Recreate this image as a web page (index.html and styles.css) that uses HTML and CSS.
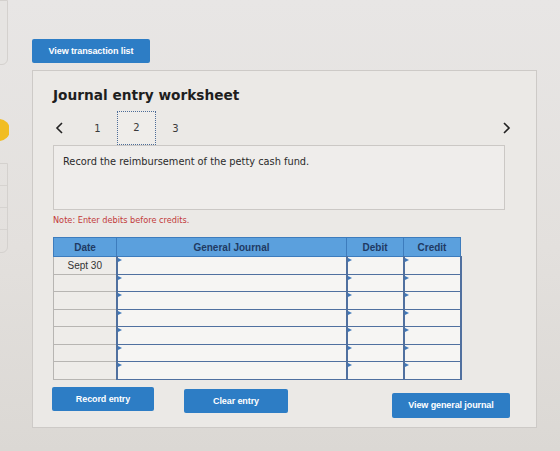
FILE: index.html
```html
<!DOCTYPE html>
<html lang="en">
<head>
  <meta charset="UTF-8" />
  <meta name="viewport" content="width=device-width, initial-scale=1.0"/>
  <title>Journal entry worksheet</title>
  <link rel="stylesheet" href="styles.css">
</head>
<body>

  <div class="page">
    <!-- Side rail (mostly scrolled out of view) -->
    <aside class="rail">
      <div class="rail-card"></div>
      <div class="rail-dot"></div>
      <ul class="rail-list">
        <li></li><li></li><li></li><li></li>
      </ul>
    </aside>

    <main class="content">
      <button class="btn btn-top">View transaction list</button>

      <section class="worksheet">
        <h1>Journal entry worksheet</h1>

        <nav class="pager">
          <span class="chev"><svg width="8" height="12" viewBox="0 0 8 12"><polyline points="7,1 2,6 7,11" fill="none" stroke="#222" stroke-width="1.6"/></svg></span>
          <span class="page-num page-first">1</span>
          <span class="page-num current">2</span>
          <span class="page-num">3</span>
          <span class="chev chev-next"><svg width="8" height="12" viewBox="0 0 8 12"><polyline points="1,1 6,6 1,11" fill="none" stroke="#222" stroke-width="1.6"/></svg></span>
        </nav>

        <div class="prompt">Record the reimbursement of the petty cash fund.</div>

        <p class="note">Note: Enter debits before credits.</p>

        <table class="journal">
          <thead>
            <tr>
              <th class="col-date">Date</th>
              <th class="col-acct">General Journal</th>
              <th class="col-amt">Debit</th>
              <th class="col-amt">Credit</th>
            </tr>
          </thead>
          <tbody>
            <tr><td class="date">Sept 30</td><td class="cell"></td><td class="cell"></td><td class="cell"></td></tr>
            <tr><td class="date"></td><td class="cell"></td><td class="cell"></td><td class="cell"></td></tr>
            <tr><td class="date"></td><td class="cell"></td><td class="cell"></td><td class="cell"></td></tr>
            <tr><td class="date"></td><td class="cell"></td><td class="cell"></td><td class="cell"></td></tr>
            <tr><td class="date"></td><td class="cell"></td><td class="cell"></td><td class="cell"></td></tr>
            <tr><td class="date"></td><td class="cell"></td><td class="cell"></td><td class="cell"></td></tr>
            <tr><td class="date"></td><td class="cell"></td><td class="cell"></td><td class="cell"></td></tr>
          </tbody>
        </table>

        <div class="actions">
          <button class="btn btn-record">Record entry</button>
          <button class="btn btn-clear">Clear entry</button>
          <button class="btn btn-view">View general journal</button>
        </div>
      </section>
    </main>
  </div>

</body>
</html>
```

FILE: styles.css
```css
* { box-sizing: border-box; }
body { margin: 0; height: 451px; overflow: hidden; background: linear-gradient(180deg, #e8e6e5 0%, #e3e0dd 55%, #dbd8d4 100%); font-family: "Liberation Sans", Arial, sans-serif; color: #333; }
.page { display: flex; height: 451px; }

/* side rail */
.rail { width: 9px; overflow: hidden; flex-shrink: 0; }
.rail-card { width: 20px; height: 65px; margin-left: -12px; border: 1px solid #d4d1ce; border-radius: 0 0 6px 0; background: #e6e4e2; }
.rail-dot { width: 22px; height: 22px; margin: 54px 0 0 -12px; border-radius: 50%; background: #f1bd22; }
.rail-list { list-style: none; margin: 22px 0 0 -12px; padding: 0; width: 20px; border: 1px solid #d4d1ce; border-radius: 0 0 6px 0; }
.rail-list li { height: 22px; border-bottom: 1px solid #d6d3d0; }
.rail-list li:last-child { border-bottom: none; }

.content { padding: 39px 0 0 23px; }

.btn { border: none; border-radius: 2px; background: #2d7dc5; color: #fff; font-family: "Liberation Sans", Arial, sans-serif; font-weight: bold; font-size: 9px; letter-spacing: -0.1px; cursor: pointer; }
.btn-top { display: block; width: 118px; height: 24px; margin-bottom: 7px; }

.worksheet { width: 505px; height: 358px; background: #ebe9e6; border: 1px solid #cdcac7; padding: 0 31px 0 20px; }
.worksheet h1 { margin: 15px 0 0; font-family: "DejaVu Sans", Verdana, sans-serif; font-size: 13.7px; line-height: 18px; color: #1e1e1e; }

.pager { display: flex; align-items: center; height: 34px; margin-top: 7px; font-family: "DejaVu Sans", Verdana, sans-serif; font-size: 10px; color: #3a3a3a; }
.chev { display: flex; width: 8px; margin-left: 2px; }
.chev-next { margin-left: auto; margin-right: -6px; }
.page-num { width: 39px; text-align: center; }
.page-first { margin-left: 15px; }
.page-num.current { height: 34px; line-height: 32px; border: 1px dotted #4d6c97; background: #efedea; }

.prompt { height: 65px; background: #efedeb; border: 1px solid #cbc8c5; padding: 10px 9px; font-family: "DejaVu Sans", Verdana, sans-serif; font-size: 9.8px; color: #2a2a2a; }

.note { margin: 5px 0 0; font-family: "DejaVu Sans", Verdana, sans-serif; font-size: 8.2px; color: #c23a3a; }

/* journal grid */
.journal { margin-top: 12px; border-collapse: collapse; width: 408px; table-layout: fixed; }
.journal th { height: 19px; background: #5ba0dd; color: #1f3a63; font-size: 10px; font-weight: bold; border: 1px solid #3d7cbd; padding: 0; }
.journal .col-date { width: 63px; }
.journal .col-acct { width: 230px; }
.journal .col-amt { width: 57px; }
.journal td { height: 17.5px; padding: 0; }
.journal .date { background: #eeece9; border: 1px solid #b7b5b2; text-align: center; font-size: 10px; color: #333; }
.journal .cell { position: relative; background: #f6f5f3; border: 2px solid #50709f; border-top-width: 1.5px; border-bottom-width: 1.5px; }
.journal .cell::before { content: ""; position: absolute; left: 0; top: 1px; border-left: 4px solid #3f77b8; border-top: 2px solid transparent; border-bottom: 2px solid transparent; }

.actions { display: flex; align-items: flex-start; margin-top: 7px; }
.btn-record, .btn-clear { width: 102px; height: 24px; }
.btn-record { margin-left: -1px; }
.btn-clear { margin: 2px 0 0 30px; width: 104px; }
.btn-view { width: 118px; height: 25px; margin: 6px 0 0 auto; margin-right: -5px; }
```
